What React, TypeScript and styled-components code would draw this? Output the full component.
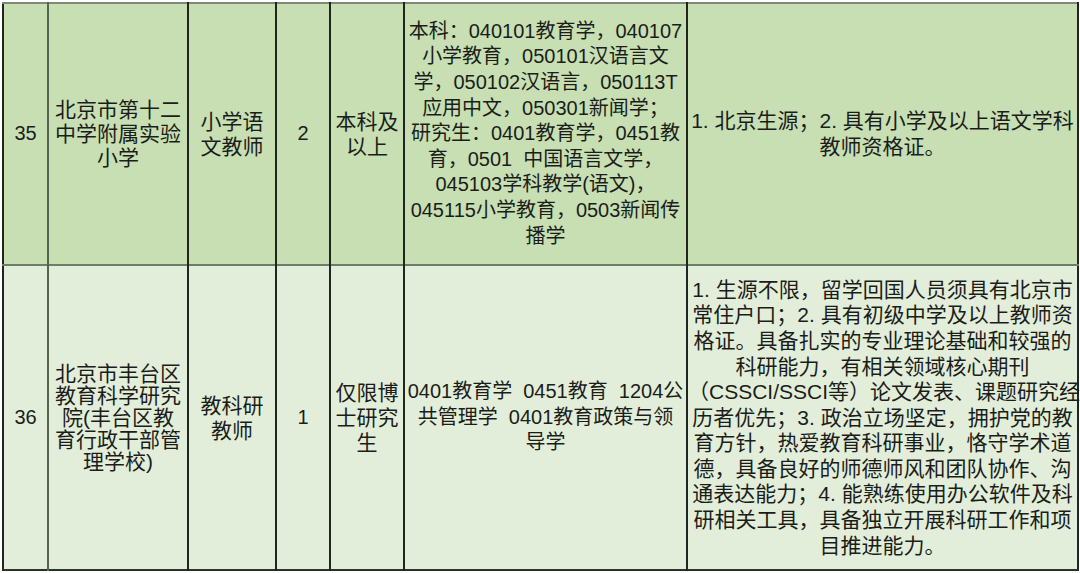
import React from 'react';
import styled, { createGlobalStyle } from 'styled-components';

const GlobalStyle = createGlobalStyle`
  html, body {
    margin: 0;
    padding: 0;
    background: #ffffff;
  }
  body {
    font-family: 'Liberation Sans', 'Noto Sans CJK SC', sans-serif;
    color: #1b1d1a;
  }
`;

const Page = styled.div`
  width: 1080px;
  height: 573px;
  padding: 2px 0 0 2px;
  box-sizing: border-box;
  overflow: hidden;
`;

const Table = styled.table`
  width: 1075px;
  border-collapse: collapse;
  table-layout: fixed;
  border-left: 2px solid #1f261d;
  border-right: 2px solid #1f261d;
  border-bottom: 2px solid #2a3328;
  border-top: 2px solid #7d8a78;
`;

const Col = styled.col<{ $width: number }>`
  width: ${({ $width }) => $width}px;
`;

const Row = styled.tr<{ $tone: 'dark' | 'light'; $height: number }>`
  height: ${({ $height }) => $height}px;
  background: ${({ $tone }) => ($tone === 'dark' ? '#c7dfb2' : '#e2eed9')};
  & + & {
    border-top: 2px solid #6e7d69;
  }
`;

const Cell = styled.td<{ $size?: number; $lh?: number }>`
  padding: 0;
  border-left: 2px solid #1f261d;
  text-align: center;
  vertical-align: middle;
  white-space: pre;
  font-size: ${({ $size }) => $size || 21}px;
  line-height: ${({ $lh }) => $lh || 25.6}px;
  &:first-child {
    border-left: none;
  }
  &.index {
    border-right: 2px solid #56634f;
  }
  &.index + td {
    border-left: none;
  }
`;

const Lines = ({ lines }: { lines: string[] }) => (
  <>
    {lines.map((line, i) => (
      <React.Fragment key={i}>
        {line}
        {i < lines.length - 1 && <br />}
      </React.Fragment>
    ))}
  </>
);

type Job = {
  id: string;
  org: string[];
  orgLh: number;
  post: string[];
  count: string;
  degree: string[];
  major: string[];
  extra: string[];
  tone: 'dark' | 'light';
  height: number;
};

const columns = [45, 140, 88, 54, 74, 283, 391];

const jobs: Job[] = [
  {
    id: '35',
    org: ['北京市第十二', '中学附属实验', '小学'],
    orgLh: 24,
    post: ['小学语', '文教师'],
    count: '2',
    degree: ['本科及', '以上'],
    major: [
      '本科：040101教育学，040107',
      '小学教育，050101汉语言文',
      '学，050102汉语言，050113T',
      '应用中文，050301新闻学；',
      '研究生：0401教育学，0451教',
      '育，0501  中国语言文学，',
      '045103学科教学(语文)，',
      '045115小学教育，0503新闻传',
      '播学',
    ],
    extra: ['1. 北京生源；2. 具有小学及以上语文学科', '教师资格证。'],
    tone: 'dark',
    height: 262,
  },
  {
    id: '36',
    org: ['北京市丰台区', '教育科学研究', '院(丰台区教', '育行政干部管', '理学校)'],
    orgLh: 22,
    post: ['教科研', '教师'],
    count: '1',
    degree: ['仅限博', '士研究', '生'],
    major: ['0401教育学  0451教育  1204公', '共管理学  0401教育政策与领', '导学'],
    extra: [
      '1. 生源不限，留学回国人员须具有北京市',
      '常住户口；2. 具有初级中学及以上教师资',
      '格证。具备扎实的专业理论基础和较强的',
      '科研能力，有相关领域核心期刊',
      '（CSSCI/SSCI等）论文发表、课题研究经',
      '历者优先；3. 政治立场坚定，拥护党的教',
      '育方针，热爱教育科研事业，恪守学术道',
      '德，具备良好的师德师风和团队协作、沟',
      '通表达能力；4. 能熟练使用办公软件及科',
      '研相关工具，具备独立开展科研工作和项',
      '目推进能力。',
    ],
    tone: 'light',
    height: 305,
  },
];

const App = () => (
  <>
    <GlobalStyle />
    <Page>
      <Table>
        <colgroup>
          {columns.map((w, i) => (
            <Col key={i} $width={w} />
          ))}
        </colgroup>
        <tbody>
          {jobs.map((job) => (
            <Row key={job.id} $tone={job.tone} $height={job.height}>
              <Cell className='index' $size={20}>{job.id}</Cell>
              <Cell $lh={job.orgLh}>
                <Lines lines={job.org} />
              </Cell>
              <Cell $lh={25}>
                <Lines lines={job.post} />
              </Cell>
              <Cell $size={20}>{job.count}</Cell>
              <Cell $lh={25}>
                <Lines lines={job.degree} />
              </Cell>
              <Cell $size={20}>
                <Lines lines={job.major} />
              </Cell>
              <Cell>
                <Lines lines={job.extra} />
              </Cell>
            </Row>
          ))}
        </tbody>
      </Table>
    </Page>
  </>
);

export default App;
